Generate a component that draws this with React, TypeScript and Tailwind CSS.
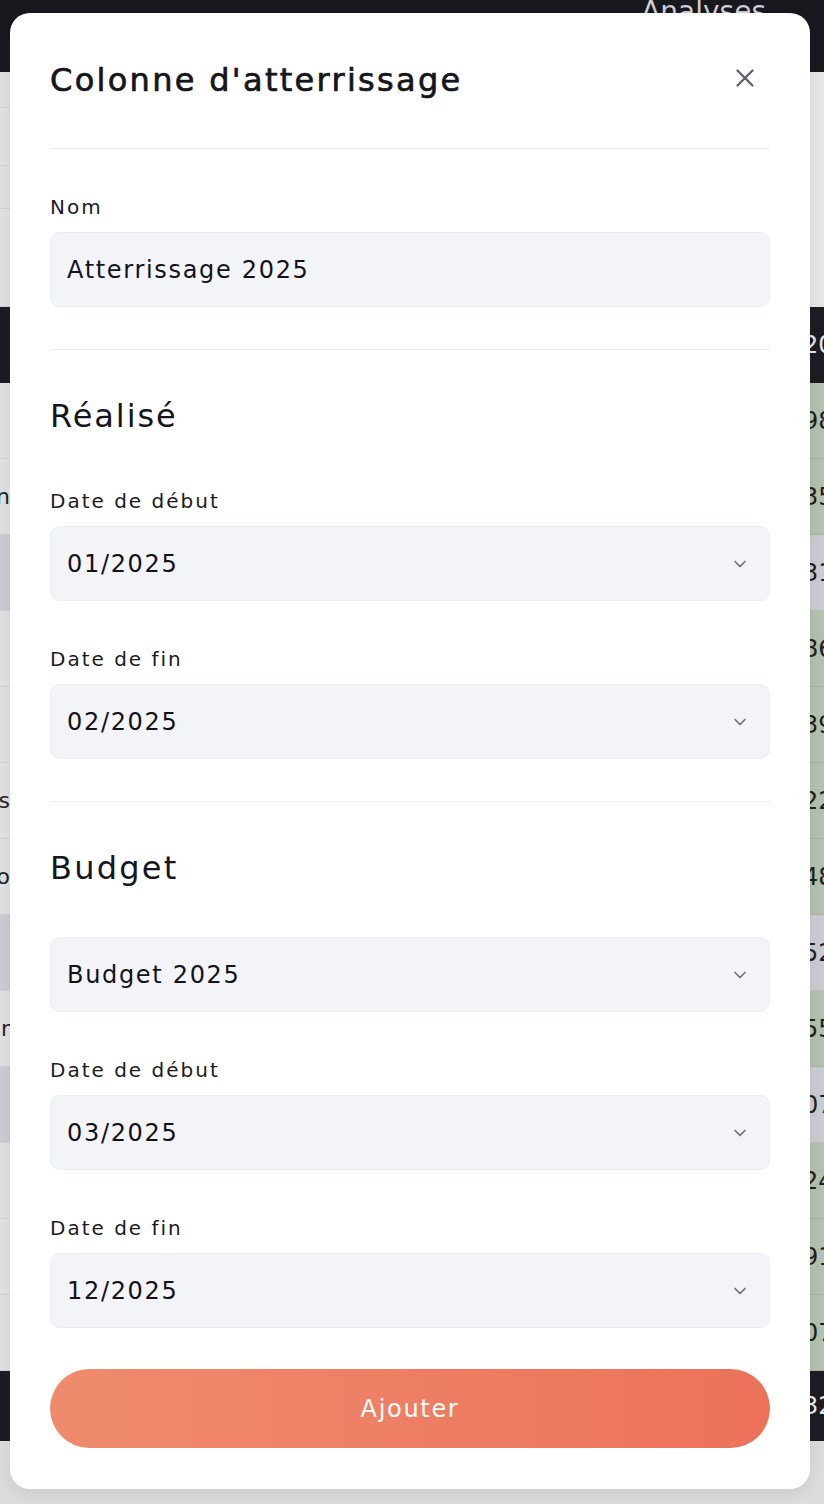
import React from 'react';
import { X, ChevronDown } from 'lucide-react';

type Row = { h: number; left: string; right: string; tone: 'light' | 'dark' | 'green' | 'gray' };

// background table rows, top to bottom (only the edges show beside the dialog)
const rows: Row[] = [
  { h: 36, left: '', right: '', tone: 'light' },
  { h: 58, left: '', right: '', tone: 'light' },
  { h: 43, left: '', right: '', tone: 'light' },
  { h: 98, left: '', right: '', tone: 'light' },
  { h: 76, left: '', right: '2025', tone: 'dark' },
  { h: 76, left: '', right: '98410', tone: 'green' },
  { h: 76, left: 'Chiffre d\u2019affaires nn', right: '35200', tone: 'green' },
  { h: 76, left: '', right: '3120', tone: 'gray' },
  { h: 76, left: '', right: '8640', tone: 'green' },
  { h: 76, left: '', right: '3905', tone: 'green' },
  { h: 76, left: 'Charges externes', right: '22310', tone: 'green' },
  { h: 76, left: 'Impôts et taxes bo', right: '4870', tone: 'green' },
  { h: 76, left: '', right: '52400', tone: 'gray' },
  { h: 76, left: 'Autres charges ar', right: '55120', tone: 'green' },
  { h: 76, left: '', right: '07330', tone: 'gray' },
  { h: 76, left: '', right: '2450', tone: 'green' },
  { h: 76, left: '', right: '9100', tone: 'green' },
  { h: 76, left: '', right: '0780', tone: 'green' },
  { h: 70, left: '', right: '3210', tone: 'dark' },
];

const toneLeft: Record<Row['tone'], string> = {
  light: 'bg-[#e1e1e3] border-b border-[#cfd0d4]',
  dark: 'bg-[#1c1c22]',
  green: 'bg-[#e1e1e3] border-b border-[#cfd0d4]',
  gray: 'bg-[#cbccd2] border-b border-[#cfd0d4]',
};

const toneRight: Record<Row['tone'], string> = {
  light: 'bg-[#e6e6e8] text-[#222]',
  dark: 'bg-[#1c1c22] text-[#e8e8ec]',
  green: 'bg-[#b3c1ae] text-[#1f1f1f] border-b border-[#a5b3a0]',
  gray: 'bg-[#cbccd2] text-[#1f1f1f] border-b border-[#bdbec4]',
};

function Field({ label, value, select }: { label?: string; value: string; select?: boolean }) {
  return (
    <div className="flex flex-col">
      {label && <div className="text-[20px] leading-[28px] text-[#1b1b22] mb-[11px] tracking-[0.1em]">{label}</div>}
      <div className="h-[75px] rounded-[10px] bg-[#f3f4f8] border border-[#eceef3] flex items-center justify-between pl-4 pr-[19px]">
        <span className="text-[24px] text-[#121218] tracking-[0.07em]">{value}</span>
        {select && <ChevronDown size={20} strokeWidth={2} className="text-[#6d6d76]" />}
      </div>
    </div>
  );
}

export default function App() {
  return (
    <div className="relative h-[1504px] w-[824px] overflow-hidden bg-[#dcdcde] font-['DejaVu_Sans',sans-serif]">
      {/* Top bar */}
      <div className="h-[72px] bg-[#18181f] flex justify-end pr-[58px]">
        <span className="text-[#cfcfd4] text-[28px] leading-none -mt-[2px]">Analyses</span>
      </div>

      {/* Table behind the dialog */}
      <div className="flex flex-col">
        {rows.map((r, i) => (
          <div key={i} className="flex" style={{ height: r.h }}>
            <div className={`w-[10px] overflow-hidden flex items-center justify-end ${toneLeft[r.tone]}`}>
              <span className="whitespace-nowrap text-[22px] text-[#222]">{r.left}</span>
            </div>
            <div className={`flex-1 ${toneLeft[r.tone]}`} />
            <div className={`w-[18px] overflow-hidden flex items-center ${toneRight[r.tone]}`}>
              <span className="whitespace-nowrap text-[24px] -ml-[3px]">{r.right}</span>
            </div>
          </div>
        ))}
      </div>

      {/* Dialog */}
      <div className="absolute left-[10px] top-[13px] w-[800px] rounded-[20px] bg-white shadow-[0_4px_16px_rgba(0,0,0,0.08)] px-10 pb-[41px]">
        <div className="h-[136px] flex items-center justify-between border-b border-[#ebecef]">
          <h1 className="text-[32px] text-[#15151c] leading-[40px] -mt-[2px] tracking-[0.072em] [-webkit-text-stroke:0.7px_#15151c]">Colonne d&apos;atterrissage</h1>
          <X size={30} strokeWidth={1.8} className="text-[#5f5f67] mr-[10px] -mt-[6px]" />
        </div>

        <div className="pt-[44px] pb-[42px] border-b border-[#ebecef]">
          <Field label="Nom" value="Atterrissage 2025" />
        </div>

        <div className="pt-[46px] pb-[42px] border-b border-[#ebecef] flex flex-col">
          <h2 className="text-[32px] leading-[40px] text-[#15151c] mb-[51px] tracking-[0.06em]">Réalisé</h2>
          <div className="flex flex-col gap-[44px]">
            <Field label="Date de début" value="01/2025" select />
            <Field label="Date de fin" value="02/2025" select />
          </div>
        </div>

        <div className="pt-[46px] flex flex-col">
          <h2 className="text-[32px] leading-[40px] text-[#15151c] mb-[49px] tracking-[0.07em]">Budget</h2>
          <div className="flex flex-col gap-[44px]">
            <Field value="Budget 2025" select />
            <Field label="Date de début" value="03/2025" select />
            <Field label="Date de fin" value="12/2025" select />
          </div>
        </div>

        <button className="mt-[41px] w-full h-[79px] rounded-full bg-gradient-to-r from-[#ef8b6d] to-[#ec725a] text-white text-[24px] tracking-[0.07em]">
          Ajouter
        </button>
      </div>
    </div>
  );
}
